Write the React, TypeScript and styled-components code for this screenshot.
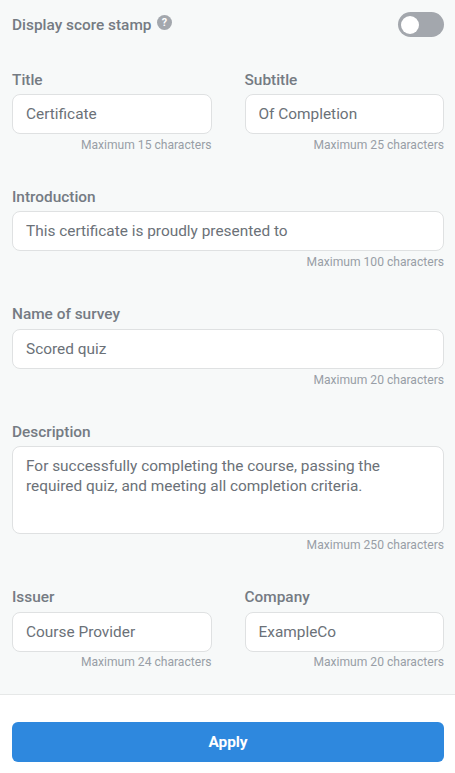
import React from "react";
import styled, { createGlobalStyle } from "styled-components";

const GlobalStyle = createGlobalStyle`
  html, body {
    margin: 0;
    padding: 0;
    background: #fff;
  }
  * {
    box-sizing: border-box;
  }
`;

const Panel = styled.div`
  width: 455px;
  height: 773px;
  display: flex;
  flex-direction: column;
  font-family: Roboto, "Liberation Sans", sans-serif;
  overflow: hidden;
`;

const Body = styled.div`
  height: 695px;
  padding: 12px 11px 0 12px;
  background: #f7f9f9;
  border-bottom: 1px solid #e6e8e8;
`;

const StampRow = styled.div`
  display: flex;
  align-items: flex-start;
  justify-content: space-between;
  height: 58.7px;
`;

const StampLabel = styled.div`
  display: flex;
  align-items: center;
  gap: 6px;
  height: 25px;
  font-size: 15.4px;
  font-weight: 500;
  color: #757b83;
`;

const Help = styled.svg`
  width: 15px;
  height: 15px;
  margin-top: -5px;
`;

const Toggle = styled.div`
  width: 46px;
  height: 25px;
  padding: 3.5px 3px;
  border-radius: 13px;
  background: #a3a7ad;
`;

const Knob = styled.div`
  width: 18px;
  height: 18px;
  border-radius: 50%;
  background: #fff;
`;

const Row = styled.div<{ $last?: boolean }>`
  display: flex;
  gap: 33px;
  margin-bottom: ${(p) => (p.$last ? 0 : 36)}px;
`;

const Field = styled.div`
  flex: 1;
  min-width: 0;
`;

const Label = styled.label`
  display: block;
  height: 23.4px;
  line-height: 18px;
  font-size: 15.4px;
  font-weight: 500;
  color: #757b83;
`;

const inputLook = `
  display: block;
  width: 100%;
  border: 1px solid #dfe1e2;
  border-radius: 8px;
  background: #fff;
  padding: 0 13px;
  font-family: Roboto, "Liberation Sans", sans-serif;
  font-size: 15.4px;
  color: #6b7178;
  outline: none;
`;

const Input = styled.input`
  ${inputLook}
  height: 40px;
`;

const TextArea = styled.textarea`
  ${inputLook}
  height: 88px;
  padding-top: 10px;
  line-height: 19.5px;
  resize: none;
`;

const Hint = styled.div`
  margin-top: 3.8px;
  height: 14.2px;
  line-height: 15px;
  text-align: right;
  font-size: 12.1px;
  color: #989ea6;
`;

const Footer = styled.div`
  flex: 1;
  padding: 27px 11px 0 12px;
  background: #fff;
`;

const ApplyButton = styled.button`
  display: block;
  width: 100%;
  height: 40px;
  border: none;
  border-radius: 6px;
  background: #2e88de;
  color: #fff;
  font-family: Roboto, "Liberation Sans", sans-serif;
  font-size: 15.4px;
  font-weight: 700;
`;

const TextField = ({ label, value, max }) => (
  <Field>
    <Label>{label}</Label>
    <Input defaultValue={value} />
    <Hint>Maximum {max} characters</Hint>
  </Field>
);

export default function App() {
  return (
    <Panel>
      <GlobalStyle />
      <Body>
        <StampRow>
          <StampLabel>
            Display score stamp
            <Help viewBox="0 0 16 16">
              <circle cx="8" cy="8" r="8" fill="#a3a7ad" />
              <text x="8" y="12" textAnchor="middle" fontSize="11.5" fontWeight="700" fill="#fff" fontFamily="Roboto">?</text>
            </Help>
          </StampLabel>
          <Toggle>
            <Knob />
          </Toggle>
        </StampRow>
        <Row>
          <TextField label="Title" value="Certificate" max={15} />
          <TextField label="Subtitle" value="Of Completion" max={25} />
        </Row>
        <Row>
          <TextField label="Introduction" value="This certificate is proudly presented to" max={100} />
        </Row>
        <Row>
          <TextField label="Name of survey" value="Scored quiz" max={20} />
        </Row>
        <Row>
          <Field>
            <Label>Description</Label>
            <TextArea defaultValue="For successfully completing the course, passing the required quiz, and meeting all completion criteria." />
            <Hint>Maximum 250 characters</Hint>
          </Field>
        </Row>
        <Row $last>
          <TextField label="Issuer" value="Course Provider" max={24} />
          <TextField label="Company" value="ExampleCo" max={20} />
        </Row>
      </Body>
      <Footer>
        <ApplyButton>Apply</ApplyButton>
      </Footer>
    </Panel>
  );
}
